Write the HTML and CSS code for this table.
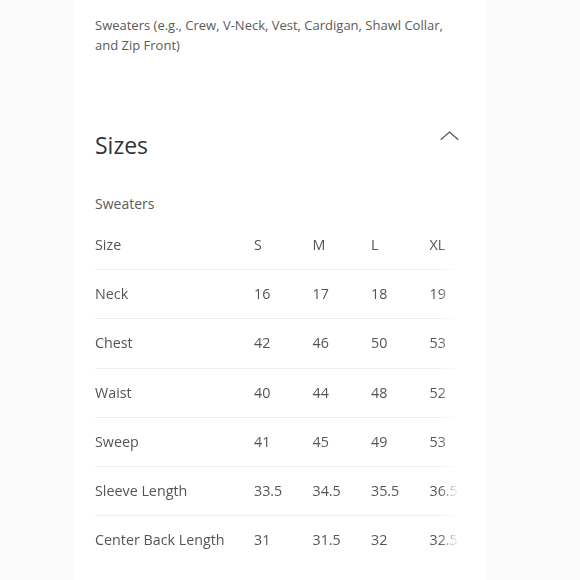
FILE: index.html
```html
<!DOCTYPE html>
<html lang="en">
<head>
<meta charset="utf-8">
<title>Sizes</title>
<link rel="stylesheet" href="styles.css">
</head>
<body>
<main class="panel">
  <p class="intro">Sweaters (e.g., Crew, V-Neck, Vest, Cardigan, Shawl Collar, and Zip Front)</p>
  <section class="sizes">
    <div class="sizes-head">
      <h2 class="sizes-title">Sizes</h2>
      <svg class="chevron" width="19" height="10" viewBox="0 0 19 10" aria-hidden="true">
        <path d="M0.7 8.7 L9.5 1 L18.3 8.7" fill="none" stroke="#555" stroke-width="1.3"/>
      </svg>
    </div>
    <h3 class="sizes-sub">Sweaters</h3>
    <div class="table-wrap">
      <table class="size-table">
        <thead>
          <tr><th>Size</th><th>S</th><th>M</th><th>L</th><th>XL</th></tr>
        </thead>
        <tbody>
          <tr><td>Neck</td><td>16</td><td>17</td><td>18</td><td>19</td></tr>
          <tr><td>Chest</td><td>42</td><td>46</td><td>50</td><td>53</td></tr>
          <tr><td>Waist</td><td>40</td><td>44</td><td>48</td><td>52</td></tr>
          <tr><td>Sweep</td><td>41</td><td>45</td><td>49</td><td>53</td></tr>
          <tr><td>Sleeve Length</td><td>33.5</td><td>34.5</td><td>35.5</td><td>36.5</td></tr>
          <tr><td>Center Back Length</td><td>31</td><td>31.5</td><td>32</td><td>32.5</td></tr>
        </tbody>
      </table>
    </div>
  </section>
</main>
</body>
</html>
```
FILE: styles.css
```css
html, body {
  margin: 0;
  padding: 0;
  background: #fbfbfb;
}

body {
  font-family: "Open Sans", "DejaVu Sans", sans-serif;
  color: #555;
  height: 580px;
  overflow: hidden;
}

.panel {
  margin-left: 74px;
  width: 412px;
  box-sizing: border-box;
  min-height: 580px;
  background: #fff;
  padding: 15px 27px 0 21px;
}

.intro {
  margin: 0;
  font-size: 13px;
  line-height: 20px;
  color: #5a5a5a;
}

.sizes {
  margin-top: 75px;
}

.sizes-head {
  display: flex;
  justify-content: space-between;
  align-items: flex-start;
}

.sizes-title {
  margin: 0;
  font-size: 23px;
  line-height: 30px;
  font-weight: 400;
  color: #333;
}

.chevron {
  display: block;
  margin-top: 1px;
}

.sizes-sub {
  margin: 34px 0 0;
  font-size: 14px;
  line-height: 20px;
  font-weight: 400;
  color: #5a5a5a;
}

.table-wrap {
  margin-top: 7px;
  width: 364px;
  overflow: hidden;
  -webkit-mask-image: linear-gradient(to right, #000 344px, transparent 364px);
  mask-image: linear-gradient(to right, #000 344px, transparent 364px);
}

.size-table {
  border-collapse: collapse;
  table-layout: fixed;
  width: 393px;
  font-size: 14.3px;
  color: #555;
}

.size-table th,
.size-table td {
  text-align: left;
  font-weight: 400;
  padding: 14px 0;
  line-height: 20.2px;
  white-space: nowrap;
}

.size-table th:first-child,
.size-table td:first-child {
  width: 159px;
}

.size-table th:nth-child(n+2),
.size-table td:nth-child(n+2) {
  width: 58.5px;
}

.size-table tr {
  border-bottom: 1px solid #f0f0f0;
}

.size-table tbody tr:last-child {
  border-bottom: none;
}
```
